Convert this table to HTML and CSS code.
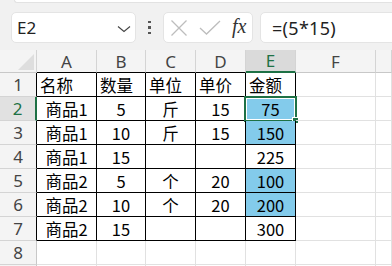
FILE: index.html
```html
<!DOCTYPE html>
<html lang="zh-CN">
<head>
<meta charset="utf-8">
<title>工作表</title>
<link rel="stylesheet" href="styles.css">
</head>
<body>
<div class="app">
  <div class="ribbon-edge"></div>

  <div class="fbar">
    <div class="namebox">
      <span class="ref">E2</span>
      <svg class="chev" width="14" height="8" viewBox="0 0 14 8"><path d="M1 1.5 L7 6.5 L13 1.5" fill="none" stroke="#444" stroke-width="1.1"/></svg>
    </div>
    <div class="grip"><i></i><i></i><i></i></div>
    <div class="btns">
      <svg class="ico" width="18" height="18" viewBox="0 0 18 18"><path d="M1.5 1.5 L16.5 16.5 M16.5 1.5 L1.5 16.5" stroke="#bdbdbd" stroke-width="1.3" fill="none"/></svg>
      <svg class="ico" width="22" height="16" viewBox="0 0 22 16"><path d="M1 8 L7.5 14 L21 1" stroke="#bdbdbd" stroke-width="1.3" fill="none"/></svg>
      <span class="fx">fx</span>
    </div>
    <div class="formula">=(5*15)</div>
  </div>

  <div class="sheet">
    <!-- column headers -->
    <div class="corner"><span class="tri"></span></div>
    <div class="ch tb">A</div>
    <div class="ch tb">B</div>
    <div class="ch tb">C</div>
    <div class="ch tb">D</div>
    <div class="ch cur">E</div>
    <div class="ch">F</div>
    <div class="ch last"></div>

    <!-- row 1 -->
    <div class="rh tb">1</div>
    <div class="c t l">名称</div>
    <div class="c t l">数量</div>
    <div class="c t l">单位</div>
    <div class="c t l">单价</div>
    <div class="c t l">金额</div>
    <div class="c"></div>
    <div class="c last"></div>

    <!-- row 2 -->
    <div class="rh cur">2</div>
    <div class="c t">商品1</div>
    <div class="c t">5</div>
    <div class="c t">斤</div>
    <div class="c t">15</div>
    <div class="c t hl active">75<span class="sel"><span class="handle"></span></span></div>
    <div class="c"></div>
    <div class="c last"></div>

    <!-- row 3 -->
    <div class="rh tb">3</div>
    <div class="c t">商品1</div>
    <div class="c t">10</div>
    <div class="c t">斤</div>
    <div class="c t">15</div>
    <div class="c t hl">150</div>
    <div class="c"></div>
    <div class="c last"></div>

    <!-- row 4 -->
    <div class="rh tb">4</div>
    <div class="c t">商品1</div>
    <div class="c t">15</div>
    <div class="c t"></div>
    <div class="c t"></div>
    <div class="c t">225</div>
    <div class="c"></div>
    <div class="c last"></div>

    <!-- row 5 -->
    <div class="rh tb">5</div>
    <div class="c t">商品2</div>
    <div class="c t">5</div>
    <div class="c t">个</div>
    <div class="c t">20</div>
    <div class="c t hl">100</div>
    <div class="c"></div>
    <div class="c last"></div>

    <!-- row 6 -->
    <div class="rh tb">6</div>
    <div class="c t">商品2</div>
    <div class="c t">10</div>
    <div class="c t">个</div>
    <div class="c t">20</div>
    <div class="c t hl">200</div>
    <div class="c"></div>
    <div class="c last"></div>

    <!-- row 7 -->
    <div class="rh tb">7</div>
    <div class="c t">商品2</div>
    <div class="c t">15</div>
    <div class="c t"></div>
    <div class="c t"></div>
    <div class="c t">300</div>
    <div class="c"></div>
    <div class="c last"></div>

    <!-- row 8 -->
    <div class="rh">8</div>
    <div class="c"></div>
    <div class="c"></div>
    <div class="c"></div>
    <div class="c"></div>
    <div class="c"></div>
    <div class="c"></div>
    <div class="c last"></div>

    <!-- row 9 (only its top edge is in view) -->
    <div class="rh"></div>
    <div class="c"></div>
    <div class="c"></div>
    <div class="c"></div>
    <div class="c"></div>
    <div class="c"></div>
    <div class="c"></div>
    <div class="c last"></div>
  </div>
</div>
</body>
</html>
```

FILE: styles.css
```css
html, body {
  margin: 0;
  padding: 0;
  background: #f1f1f1;
  overflow: hidden;
}

.app {
  width: 392px;
  height: 266px;
  overflow: hidden;
  background: #f1f1f1;
}

/* bottom edge of the ribbon panel */
.ribbon-edge {
  height: 2px;
  margin-left: 14px;
  background: #fff;
  border-bottom: 1px solid #e2e2e2;
  border-left: 1px solid #e2e2e2;
  border-bottom-left-radius: 6px;
}

/* formula bar */
.fbar {
  display: flex;
  align-items: center;
  height: 31px;
  padding: 9px 0 7px 11px;
}

.namebox {
  box-sizing: border-box;
  width: 125px;
  height: 31px;
  background: #fff;
  border: 1px solid #e4e4e4;
  border-radius: 5px;
  display: flex;
  align-items: center;
  justify-content: space-between;
  padding: 0 4px 0 5px;
  font-family: "Noto Sans", "Open Sans", sans-serif;
  font-size: 17px;
  color: #222;
}

.chev {
  margin-top: 2px;
}

.grip {
  width: 3px;
  margin: 0 12px 0 12px;
  display: flex;
  flex-direction: column;
  gap: 3px;
}
.grip i {
  display: block;
  width: 3px;
  height: 2.5px;
  background: #555;
}

.btns {
  box-sizing: border-box;
  width: 90px;
  height: 31px;
  background: #fff;
  border: 1px solid #e4e4e4;
  border-radius: 5px;
  display: flex;
  align-items: center;
  padding-left: 6px;
  gap: 11px;
}
.ico {
  display: block;
}
.fx {
  font-family: "Liberation Serif", "DejaVu Serif", serif;
  font-style: italic;
  font-size: 20px;
  color: #333;
  margin-left: 0;
  margin-top: -2px;
}

.formula {
  box-sizing: border-box;
  flex: 1;
  height: 31px;
  margin-left: 7px;
  margin-right: -10px;
  background: #fff;
  border: 1px solid #e4e4e4;
  border-radius: 5px;
  padding-left: 11px;
  display: flex;
  align-items: center;
  font-family: "Noto Sans", "Open Sans", sans-serif;
  font-size: 18px;
  letter-spacing: 0.3px;
  color: #222;
}

/* worksheet grid */
.sheet {
  display: grid;
  grid-template-columns: 37px 60px 49px 50px 50px 50px 80px 1fr;
  grid-template-rows: 23px repeat(9, 24px);
  background: #fff;
}

.sheet > div {
  box-sizing: border-box;
  border-right: 1px solid #e1e1e1;
  border-bottom: 1px solid #e1e1e1;
}

.corner {
  background: #f4f4f4;
  border-right-color: #d4d4d4 !important;
  border-bottom-color: #c8c8c8 !important;
  position: relative;
}
.tri {
  position: absolute;
  right: 2px;
  bottom: 2px;
  width: 0;
  height: 0;
  border-left: 16px solid transparent;
  border-bottom: 16px solid #dedede;
}

.ch, .rh {
  background: #f4f4f4;
  font-family: "Noto Sans", "Open Sans", sans-serif;
  font-size: 17px;
  color: #444;
  display: flex;
  align-items: center;
  justify-content: center;
}
.ch {
  border-right-color: #d4d4d4 !important;
  border-bottom-color: #c8c8c8 !important;
}
.rh {
  border-right-color: #c8c8c8 !important;
  border-bottom-color: #d4d4d4 !important;
}
.ch.tb {
  border-bottom-color: #000 !important;
}
.rh.tb {
  border-right-color: #000 !important;
}
.ch.cur {
  background: #dadada;
  color: #1e7145;
  border-bottom: 2px solid #1e7145 !important;
}
.rh.cur {
  background: #e1e1e1;
  color: #1e7145;
  border-right: 2px solid #1e7145 !important;
}

.c {
  font-family: "Noto Sans CJK SC", "Noto Sans", sans-serif;
  font-size: 16.5px;
  color: #000;
  display: flex;
  align-items: center;
  justify-content: center;
  white-space: nowrap;
  position: relative;
}
.c.l {
  justify-content: flex-start;
  padding-left: 3px;
}
.c.t {
  border-right-color: #000 !important;
  border-bottom-color: #000 !important;
}
.c.hl {
  background: #83cbeb;
}

/* active cell frame and fill handle */
.sel {
  position: absolute;
  left: -2px;
  top: -1px;
  right: -2px;
  bottom: -2px;
  border: 2px solid #1e7145;
  box-shadow: inset 0 0 0 1px #fff;
  pointer-events: none;
}
.handle {
  position: absolute;
  right: -4px;
  bottom: -4px;
  width: 5px;
  height: 5px;
  background: #1e7145;
  border: 1px solid #fff;
}
```
